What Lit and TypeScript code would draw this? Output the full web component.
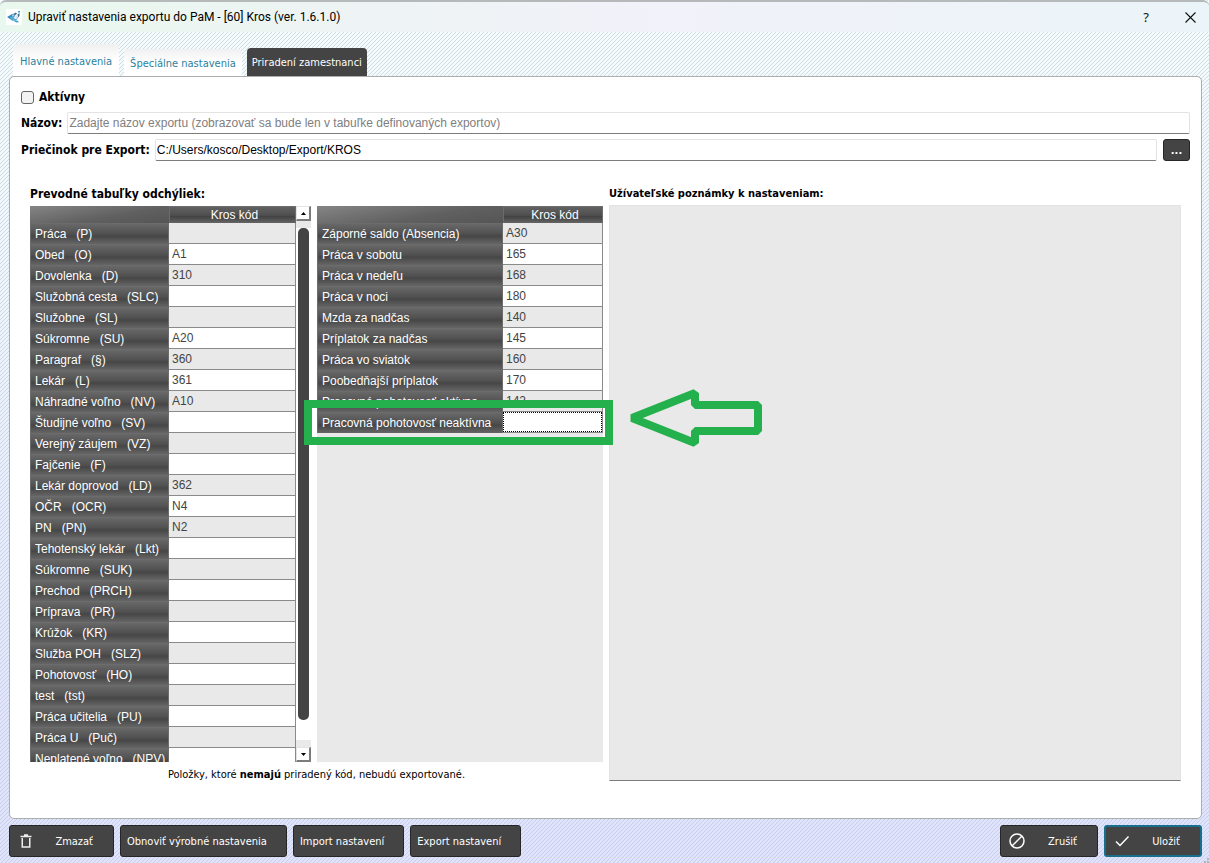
import { LitElement, html, css, svg } from "lit";
import { customElement, property } from "lit/decorators.js";

type Row = [name: string, code: string];

const DEVIATIONS: Row[] = [
  ["Práca   (P)", ""],
  ["Obed   (O)", "A1"],
  ["Dovolenka   (D)", "310"],
  ["Služobná cesta   (SLC)", ""],
  ["Služobne   (SL)", ""],
  ["Súkromne   (SU)", "A20"],
  ["Paragraf   (§)", "360"],
  ["Lekár   (L)", "361"],
  ["Náhradné voľno   (NV)", "A10"],
  ["Študijné voľno   (SV)", ""],
  ["Verejný záujem   (VZ)", ""],
  ["Fajčenie   (F)", ""],
  ["Lekár doprovod   (LD)", "362"],
  ["OČR   (OCR)", "N4"],
  ["PN   (PN)", "N2"],
  ["Tehotenský lekár   (Lkt)", ""],
  ["Súkromne   (SUK)", ""],
  ["Prechod   (PRCH)", ""],
  ["Príprava   (PR)", ""],
  ["Krúžok   (KR)", ""],
  ["Služba POH   (SLZ)", ""],
  ["Pohotovosť   (HO)", ""],
  ["test   (tst)", ""],
  ["Práca učitelia   (PU)", ""],
  ["Práca U   (Puč)", ""],
  ["Neplatené voľno   (NPV)", ""],
];

const SURCHARGES: Row[] = [
  ["Záporné saldo (Absencia)", "A30"],
  ["Práca v sobotu", "165"],
  ["Práca v nedeľu", "168"],
  ["Práca v noci", "180"],
  ["Mzda za nadčas", "140"],
  ["Príplatok za nadčas", "145"],
  ["Práca vo sviatok", "160"],
  ["Poobedňajší príplatok", "170"],
  ["Pracovná pohotovosť aktívna", "142"],
  ["Pracovná pohotovosť neaktívna", ""],
];

@customElement("code-table")
export class CodeTable extends LitElement {
  @property({ attribute: false }) rows: Row[] = [];
  @property({ type: Number }) editing = -1;

  static styles = css`
    :host {
      display: block;
      overflow: hidden;
      background: #e9e9e9;
    }
    table {
      width: 100%;
      table-layout: fixed;
      border-collapse: separate;
      border-spacing: 0;
      font: 12px/19px "Liberation Sans", Arial, sans-serif;
    }
    .name {
      width: var(--name-width, 139px);
    }
    th,
    td {
      box-sizing: border-box;
      height: 21px;
      padding: 0;
      text-align: left;
      font-weight: normal;
      white-space: pre;
      overflow: hidden;
    }
    thead th {
      height: 17px;
      padding-left: 4px;
      line-height: 16px;
      text-align: center;
      color: #fff;
      border: 1px solid #6c6c6c;
      border-width: 1px 1px 0 1px;
      background: linear-gradient(#616161, #505050 50%, #434343 60%, #656565);
    }
    thead .corner {
      border: 0;
      background: linear-gradient(170deg, #858585, #606060 60%, #555);
    }
    tbody th {
      padding-left: 4px;
      color: #fff;
      border: 1px solid #6c6c6c;
      border-width: 1px 1px 0 1px;
      background: linear-gradient(#686868, #505050 50%, #464646 60%, #656565);
    }
    td {
      padding: 1px 0 0 3px;
      color: #444;
      background: #fff;
      border: 1px solid #8a8a8a;
      border-width: 0 1px 1px 0;
    }
    tr:nth-child(odd) td {
      background: #e9e9e9;
    }
    tr td.editing {
      padding: 0;
    }
    input {
      display: block;
      box-sizing: border-box;
      width: 100%;
      height: 20px;
      margin: 0;
      padding: 0 2px;
      border: 1px dotted #000;
      border-radius: 0;
      outline: none;
      background: #fff;
      font: inherit;
      color: #444;
    }
  `;

  render() {
    return html`
      <table>
        <colgroup>
          <col class="name" />
          <col />
        </colgroup>
        <thead>
          <tr>
            <th class="corner"></th>
            <th scope="col">Kros kód</th>
          </tr>
        </thead>
        <tbody>
          ${this.rows.map(
            ([name, code], i) => html`<tr>
              <th scope="row">${name}</th>
              ${i === this.editing
                ? html`<td class="editing"><input type="text" aria-label=${name} .value=${code} /></td>`
                : html`<td>${code}</td>`}
            </tr>`
          )}
        </tbody>
      </table>
    `;
  }
}

const appIcon = svg`<svg class="app-icon" viewBox="0 0 16 16" aria-hidden="true">
  <rect width="16" height="16" rx="1" fill="#fff"/>
  <path d="M1 8 7 4.500 6 8l1 4z" fill="#2f8fc4"/>
  <path d="M4 8.500 8 6l4 2.500L10 12l-4-.5z" fill="#58a9d6"/>
  <path d="M7 5 10 3.500l1 1.500L8.500 6.500zM11.500 5.500l2-1.500v3l-1.500 1.500z" fill="#4a6f8d"/>
  <circle cx="9.500" cy="8.500" r="1.500" fill="#e8f4fa"/>
  <path d="M12 2h2v1.500h-2zM8 12.500l3-1 2 1.500-2 .5z" fill="#2f9fcf"/>
</svg>`;

@customElement("app-root")
export class AppRoot extends LitElement {
  static styles = css`
    :host {
      display: block;
      height: 100vh;
      min-height: 640px;
      font: 11px/14px "DejaVu Sans Condensed", Tahoma, sans-serif;
      color: #000;
    }
    .window {
      position: relative;
      display: flex;
      flex-direction: column;
      box-sizing: border-box;
      height: 100%;
      overflow: hidden;
      background: url("data:image/svg+xml,%3Csvg xmlns='http://www.w3.org/2000/svg' width='4' height='4'%3E%3Cpath d='M-1 1L1-1M-1 5L5-1M3 5L5 3' stroke='%23b4c0be' stroke-opacity='.65' stroke-width='.8'/%3E%3C/svg%3E"),
        linear-gradient(#f5fcff, #edf4fd 35%, #e0e4ff 85%, #dfe3ff);
    }
    .titlebar {
      display: flex;
      align-items: center;
      gap: 6px;
      box-sizing: border-box;
      height: 32px;
      flex: none;
      padding: 0 12px 0 6px;
      border-top: 2px solid #b5b9b9;
      border-radius: 6px 6px 0 0;
      background: linear-gradient(90deg, #e9f8ef, #edf4f3 25%, #f1f2fa 55%, #ebf4f8);
    }
    .app-icon {
      width: 16px;
      height: 16px;
    }
    h1 {
      flex: 1;
      margin: 0;
      font: 12px/16px Roboto, "Segoe UI", sans-serif;
    }
    .caption-button {
      display: flex;
      align-items: center;
      justify-content: center;
      width: 14px;
      height: 20px;
      padding: 0;
      border: 0;
      background: none;
      font: 13px/16px "Noto Sans", sans-serif;
      color: #111;
    }
    .help {
      margin-right: 24px;
    }
    .tabs {
      display: flex;
      align-items: flex-end;
      flex: none;
      gap: 5px;
      height: 44px;
      padding: 0 13px;
    }
    .tab {
      box-sizing: border-box;
      height: 27px;
      padding: 2px 6px 0;
      border: 0;
      border-radius: 4px 4px 0 0;
      background: linear-gradient(#f0f0f0, #fff 50%);
      font: inherit;
      color: #2b7f9e;
    }
    .tab.first {
      height: 32px;
      padding: 3px 7px 0;
    }
    .tab.selected {
      height: 28px;
      padding: 2px 5px 0;
      background: #444;
      color: #fff;
    }
    .panel {
      display: flex;
      flex-direction: column;
      flex: 1;
      min-height: 0;
      margin: 0 7px 0 9px;
      padding: 12px 11px 37px;
      border: 1px solid #adadad;
      border-radius: 5px;
      background: #fff;
    }
    .active {
      display: flex;
      align-items: center;
      gap: 5px;
      height: 16px;
      margin-bottom: 7px;
      font-size: 12px;
      font-weight: bold;
    }
    .active input {
      appearance: none;
      box-sizing: border-box;
      width: 13px;
      height: 13px;
      margin: 0;
      border: 1px solid #666;
      border-radius: 3px;
      background: #f3f3f3;
    }
    .field {
      display: flex;
      align-items: center;
      gap: 5px;
      height: 22px;
      margin-bottom: 5px;
    }
    .field label {
      font-size: 12px;
      font-weight: bold;
    }
    .field input {
      flex: 1;
      min-width: 0;
      box-sizing: border-box;
      height: 22px;
      padding: 0 1px;
      border: 1px solid #e3e3e3;
      border-bottom-color: #7c7c7c;
      border-radius: 2px;
      outline: none;
      background: #fff;
      font: 12px/16px "Liberation Sans", Arial, sans-serif;
      color: #000;
    }
    .field input::placeholder {
      color: #808080;
      opacity: 1;
    }
    .dark {
      box-sizing: border-box;
      border: 1px solid #262626;
      border-radius: 3px;
      background: #444;
      font: inherit;
      color: #fff;
    }
    .browse {
      width: 27px;
      height: 22px;
      margin-left: 1px;
      padding: 2px 0 0;
      font-weight: bold;
    }
    .columns {
      display: grid;
      grid-template-columns: 573fr 572fr;
      gap: 6px;
      flex: 1;
      min-height: 0;
      margin: 20px 9px 0;
    }
    .codes,
    .notes {
      display: flex;
      flex-direction: column;
      min-width: 0;
      min-height: 0;
    }
    h2,
    .notes label {
      margin: 0 0 4px;
      font-size: 12px;
      line-height: 16px;
      font-weight: bold;
    }
    .notes label {
      margin-bottom: 3px;
      font-size: 11px;
    }
    .tables {
      position: relative;
      display: grid;
      grid-template-columns: 281fr 286fr;
      gap: 6px;
      flex: 1;
      min-height: 0;
    }
    .scroll-area {
      display: flex;
      min-height: 0;
    }
    .scroll-area code-table {
      flex: 1;
    }
    .surcharges {
      --name-width: 186px;
    }
    .scrollbar {
      display: flex;
      flex-direction: column;
      width: 15px;
    }
    .step {
      display: flex;
      align-items: center;
      justify-content: center;
      box-sizing: border-box;
      width: 15px;
      height: 15px;
      padding: 0;
      border: 1px solid #e3e3e3;
      border-right: 2px solid #7c7c7c;
      border-bottom: 2px solid #7c7c7c;
      background: #fff;
    }
    .step svg {
      width: 5px;
      height: 3px;
    }
    .track {
      flex: 1;
      box-sizing: border-box;
      padding: 0 2px;
      border: solid #e9e9e9;
      border-width: 7px 0;
      background: #fff;
    }
    .thumb {
      height: 96%;
      border-radius: 5px;
      background: #444;
    }
    .hint {
      margin: 7px 0 0;
      line-height: 12px;
      text-align: center;
    }
    textarea {
      flex: 1;
      box-sizing: border-box;
      width: 100%;
      margin: 0;
      border: 1px solid #e3e3e3;
      border-bottom-color: #7c7c7c;
      border-radius: 0;
      outline: none;
      resize: none;
      background: #e9e9e9;
    }
    .marker {
      position: absolute;
      top: 194px;
      left: 274px;
      box-sizing: border-box;
      width: 309px;
      height: 45px;
      border: 8px solid #23b04d;
    }
    .arrow {
      position: absolute;
      top: 182px;
      left: 598px;
      width: 136px;
      height: 60px;
      pointer-events: none;
    }
    .actions {
      display: flex;
      flex: none;
      gap: 6px;
      padding: 6px 7px 6px 9px;
    }
    .actions .dark {
      display: flex;
      align-items: center;
      height: 32px;
      padding: 2px 19px 0 6px;
    }
    .actions .with-icon {
      width: 98px;
      padding: 0 20px 0 8px;
      justify-content: space-between;
    }
    .actions .with-icon span {
      padding-top: 2px;
    }
    .actions .delete {
      width: 105px;
    }
    .actions .save {
      border: 2px solid #176f8d;
    }
    .actions svg {
      width: 16px;
      height: 16px;
    }
    .spacer {
      flex: 1;
    }
    .grip {
      position: absolute;
      right: 0;
      bottom: 0;
      width: 5px;
      height: 5px;
    }
  `;

  render() {
    return html`
      <div class="window">
        <header class="titlebar">
          ${appIcon}
          <h1>Upraviť nastavenia exportu do PaM - [60] Kros (ver. 1.6.1.0)</h1>
          <button class="caption-button help" aria-label="Pomocník">?</button>
          <button class="caption-button" aria-label="Zavrieť">
            <svg width="11" height="11" viewBox="0 0 11 11" fill="none" stroke="#111" stroke-width="1.100">
              <path d="M.5.5l10 10M10.500.5l-10 10" />
            </svg>
          </button>
        </header>
        <nav class="tabs" role="tablist">
          <button class="tab first" role="tab">Hlavné nastavenia</button>
          <button class="tab" role="tab">Špeciálne nastavenia</button>
          <button class="tab selected" role="tab" aria-selected="true">Priradení zamestnanci</button>
        </nav>
        <main class="panel">
          <label class="active"><input type="checkbox" />Aktívny</label>
          <div class="field">
            <label for="name">Názov:</label>
            <input id="name" type="text" placeholder="Zadajte názov exportu (zobrazovať sa bude len v tabuľke definovaných exportov)" />
          </div>
          <div class="field">
            <label for="folder">Priečinok pre Export:</label>
            <input id="folder" type="text" .value=${"C:/Users/kosco/Desktop/Export/KROS"} />
            <button class="dark browse">...</button>
          </div>
          <div class="columns">
            <section class="codes">
              <h2>Prevodné tabuľky odchýliek:</h2>
              <div class="tables">
                <div class="scroll-area">
                  <code-table .rows=${DEVIATIONS}></code-table>
                  <div class="scrollbar">
                    <button class="step" aria-label="Nahor">
                      <svg viewBox="0 0 5 3"><path d="M0 3 2.500 0 5 3z" /></svg>
                    </button>
                    <div class="track"><div class="thumb"></div></div>
                    <button class="step" aria-label="Nadol">
                      <svg viewBox="0 0 5 3"><path d="M0 0 2.500 3 5 0z" /></svg>
                    </button>
                  </div>
                </div>
                <code-table class="surcharges" .rows=${SURCHARGES} .editing=${9}></code-table>
                <div class="marker"></div>
                <svg class="arrow" viewBox="0 0 136 60" fill="none" stroke="#23b04d" stroke-width="8" stroke-linejoin="bevel">
                  <path d="M4 30 67 5v12h63v26H67v12z" />
                </svg>
              </div>
              <p class="hint">Položky, ktoré <b>nemajú</b> priradený kód, nebudú exportované.</p>
            </section>
            <section class="notes">
              <label for="notes">Užívateľské poznámky k nastaveniam:</label>
              <textarea id="notes"></textarea>
            </section>
          </div>
        </main>
        <footer class="actions">
          <button class="dark with-icon delete">
            <svg viewBox="0 0 16 16" fill="none" stroke="#eee">
              <path d="M2.500 3.500h11M6 2h4" stroke-width="1.500" />
              <path d="M4.250 5v9h7.500V5" stroke-width="1.500" />
            </svg>
            <span>Zmazať</span>
          </button>
          <button class="dark">Obnoviť výrobné nastavenia</button>
          <button class="dark">Import nastavení</button>
          <button class="dark">Export nastavení</button>
          <span class="spacer"></span>
          <button class="dark with-icon">
            <svg viewBox="0 0 16 16" fill="none" stroke="#fff" stroke-width="1.500">
              <circle cx="8" cy="8" r="7" />
              <path d="M13 3 3 13" />
            </svg>
            <span>Zrušiť</span>
          </button>
          <button class="dark with-icon save">
            <svg viewBox="0 0 16 16" fill="none" stroke="#fff" stroke-width="1.500">
              <path d="M2 8.500 6 12.500 14.500 3.500" />
            </svg>
            <span>Uložiť</span>
          </button>
        </footer>
        <svg class="grip" viewBox="0 0 5 5" fill="#b4b4bc">
          <path d="M3 0h2v2H3zM0 3h2v2H0zM3 3h2v2H3z" />
        </svg>
      </div>
    `;
  }
}
